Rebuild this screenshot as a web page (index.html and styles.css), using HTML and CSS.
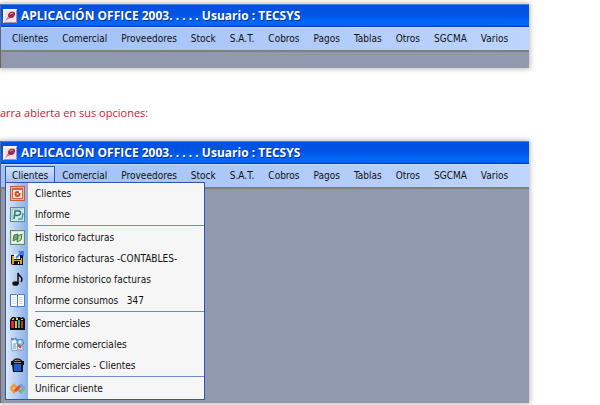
FILE: index.html
```html
<!DOCTYPE html>
<html lang="es">
<head>
    <meta charset="UTF-8">
    <meta name="viewport" content="width=device-width, initial-scale=1.0">
    <title>Aplicación Office 2003</title>
    <link rel="stylesheet" href="styles.css">
</head>
<body>

    <!-- Barra cerrada -->
    <section class="window">
        <header class="title-bar">
            <svg class="app-icon" viewBox="0 0 14 14">
                <rect width="14" height="14" fill="#f3e1e8"/>
                <path d="M1 13V1h12" fill="none" stroke="#fff"/>
                <path d="M1 13.500h12.500V1" fill="none" stroke="#b98ba0"/>
                <path d="M2 12l4-6 4 2-5 2z" fill="#c27a92"/>
                <path d="M5 7q0-4 4-4.500 3.500 0 3 3Q11 9 8 9 5.500 9 5 7z" fill="#a0274c"/>
                <path d="M7 5l3-1" stroke="#dfa3b6"/>
            </svg>
            <h1>APLICACIÓN OFFICE 2003. . . . . Usuario : TECSYS</h1>
        </header>
        <nav class="menu-bar">
            <button class="menu-btn">Clientes</button>
            <button class="menu-btn">Comercial</button>
            <button class="menu-btn">Proveedores</button>
            <button class="menu-btn">Stock</button>
            <button class="menu-btn">S.A.T.</button>
            <button class="menu-btn">Cobros</button>
            <button class="menu-btn">Pagos</button>
            <button class="menu-btn">Tablas</button>
            <button class="menu-btn">Otros</button>
            <button class="menu-btn">SGCMA</button>
            <button class="menu-btn">Varios</button>
        </nav>
        <div class="workspace workspace-short"></div>
    </section>

    <p class="caption">arra abierta en sus opciones:</p>

    <!-- Barra abierta -->
    <section class="window">
        <header class="title-bar">
            <svg class="app-icon" viewBox="0 0 14 14">
                <rect width="14" height="14" fill="#f3e1e8"/>
                <path d="M1 13V1h12" fill="none" stroke="#fff"/>
                <path d="M1 13.500h12.500V1" fill="none" stroke="#b98ba0"/>
                <path d="M2 12l4-6 4 2-5 2z" fill="#c27a92"/>
                <path d="M5 7q0-4 4-4.500 3.500 0 3 3Q11 9 8 9 5.500 9 5 7z" fill="#a0274c"/>
                <path d="M7 5l3-1" stroke="#dfa3b6"/>
            </svg>
            <h1>APLICACIÓN OFFICE 2003. . . . . Usuario : TECSYS</h1>
        </header>
        <nav class="menu-bar">
            <div class="menu">
                <button class="menu-btn open" aria-expanded="true">Clientes</button>
                <div class="dropdown">
                    <button class="item">
                        <svg class="icon" viewBox="0 0 15 15">
                            <rect x=".5" y=".5" width="14" height="14" fill="#f0b49a" stroke="#c8593a"/>
                            <rect x="2" y="2" width="11" height="11" fill="#d9613c"/>
                            <rect x="3" y="4" width="9" height="8" fill="#fbe9df"/>
                            <circle cx="7.500" cy="8" r="3" fill="#d04a22"/>
                            <circle cx="7.500" cy="8" r="1" fill="#fbe9df"/>
                            <path d="M9 5h2v2H9z" fill="#fff"/>
                        </svg>
                        Clientes
                    </button>
                    <button class="item">
                        <svg class="icon" viewBox="0 0 15 15">
                            <rect x=".5" y=".5" width="14" height="14" fill="#d5e9ea" stroke="#4f9096"/>
                            <path d="M2 13V2h11" fill="none" stroke="#8cbcc0"/>
                            <path d="M4 12l1-8h3.500q2.500 0 2 2.300Q10 8.500 7 8.500H5" fill="none" stroke="#27757d" stroke-width="1.500"/>
                            <path d="M8 12h4l1-6" fill="none" stroke="#4a979d" stroke-width="1.500"/>
                        </svg>
                        Informe
                    </button>
                    <hr>
                    <button class="item">
                        <svg class="icon" viewBox="0 0 15 15">
                            <rect x=".5" y=".5" width="14" height="14" fill="#d6e7d4" stroke="#5b8f62"/>
                            <rect x="2" y="2" width="11" height="11" fill="#f0f6ee"/>
                            <path d="M4 5l4-1-1 5-4 2z" fill="#79a879" stroke="#3d7a48"/>
                            <path d="M8 6l4-2-1 6-4 2z" fill="#b9d5b6" stroke="#3d7a48"/>
                        </svg>
                        Historico facturas
                    </button>
                    <button class="item">
                        <svg class="icon" viewBox="0 0 15 15">
                            <path d="M1 4h12v10H3l-2-1z" fill="#111"/>
                            <path d="M2 5h2v4h7V7h1v6H2z" fill="#e6a51c"/>
                            <rect x="4" y="3" width="6" height="5" fill="#f2f2f2"/>
                            <rect x="4" y="10" width="6" height="4" fill="#111"/>
                            <rect x="8" y="11" width="1" height="2" fill="#fff"/>
                            <path d="M6 7l5-5" stroke="#3a7be8" stroke-width="2"/>
                            <path d="M8 0h6v6l-2-2-2-2z" fill="#3a7be8"/>
                        </svg>
                        Historico facturas -CONTABLES-
                    </button>
                    <button class="item">
                        <svg class="icon" viewBox="0 0 15 15">
                            <ellipse cx="5.500" cy="11.500" rx="3.200" ry="2.300" fill="#111"/>
                            <path d="M8 12V1q.5 2.500 2.500 3.500Q13 6.500 11 10" fill="none" stroke="#111" stroke-width="1.500"/>
                        </svg>
                        Informe historico facturas
                    </button>
                    <button class="item">
                        <svg class="icon" viewBox="0 0 15 15">
                            <path d="M.5 1.500h6l1 1 1-1h6v12h-6l-1 1-1-1h-6z" fill="#fff" stroke="#3f7fd6"/>
                            <path d="M7.500 2v12" stroke="#3f7fd6"/>
                            <path d="M2 4.500h4M2 6.500h4M2 8.500h4M2 10.500h4M9 4.500h4M9 6.500h4M9 8.500h4M9 10.500h4" stroke="#d4d8dc"/>
                        </svg>
                        <span class="label">Informe consumos   347</span>
                    </button>
                    <hr>
                    <button class="item">
                        <svg class="icon" viewBox="0 0 15 15">
                            <path d="M0 4l2-3h3l1 1 2-1h2l1 1 2-1 2 2v11H0z" fill="#111"/>
                            <path d="M1 5h3v7H1z" fill="#d92b1f"/>
                            <path d="M2 3l2-1v2H2zM6 2h2v2H6z" fill="#f3d13a"/>
                            <path d="M5 5h2v7H5z" fill="#f2b51d"/>
                            <path d="M8 4h2v8H8z" fill="#24b5b5"/>
                            <path d="M11 5h2v7h-2z" fill="#d92b1f"/>
                            <path d="M11 3h2v1h-2z" fill="#f3d13a"/>
                        </svg>
                        Comerciales
                    </button>
                    <button class="item">
                        <svg class="icon" viewBox="0 0 15 15">
                            <path d="M1 4l4-2 3 2v9l-6 1z" fill="#edf4fb" stroke="#7fa3c4"/>
                            <path d="M3 7h3M3 9h3M3 11h3" stroke="#6c93b8"/>
                            <path d="M1 2h3M5 1l2 2" stroke="#5c8fbd" stroke-width="2"/>
                            <path d="M7 3l5-1 2 4-3 3-4-2z" fill="#7dbbe0" stroke="#4a86b4"/>
                            <circle cx="10" cy="5" r="1.500" fill="#dff2fb"/>
                            <path d="M7 9h6v4H8z" fill="#f8f8fb" stroke="#7793bd"/>
                            <path d="M8 8l3 3" stroke="#d8483b" stroke-width="2"/>
                        </svg>
                        Informe comerciales
                    </button>
                    <button class="item">
                        <svg class="icon" viewBox="0 0 15 15">
                            <path d="M3 3q4-4 9 0" fill="none" stroke="#222" stroke-width="1.500"/>
                            <path d="M1 3h13v4H1z" fill="#111"/>
                            <path d="M2 6h11v8H3z" fill="#111"/>
                            <path d="M4 6h7v7H4z" fill="#1f5bd0"/>
                            <path d="M4 4h7v1H4z" fill="#8296ae"/>
                            <path d="M6 2h3v1H6z" fill="#d9603b"/>
                        </svg>
                        Comerciales - Clientes
                    </button>
                    <hr>
                    <button class="item">
                        <svg class="icon" viewBox="0 0 15 15">
                            <path d="M7 7L4 4 1 7l3 4 3-3" fill="none" stroke="#ef9a2d" stroke-width="2.500"/>
                            <path d="M8 7l3-3 3 3-3 4-3-3" fill="none" stroke="#6fa6dc" stroke-width="2.500"/>
                            <path d="M5 10l5-5" stroke="#e2502f" stroke-width="3"/>
                            <path d="M9 9l2 2 3-4" fill="none" stroke="#7dbb4c" stroke-width="2"/>
                        </svg>
                        Unificar cliente
                    </button>
                </div>
            </div>
            <button class="menu-btn">Comercial</button>
            <button class="menu-btn">Proveedores</button>
            <button class="menu-btn">Stock</button>
            <button class="menu-btn">S.A.T.</button>
            <button class="menu-btn">Cobros</button>
            <button class="menu-btn">Pagos</button>
            <button class="menu-btn">Tablas</button>
            <button class="menu-btn">Otros</button>
            <button class="menu-btn">SGCMA</button>
            <button class="menu-btn">Varios</button>
        </nav>
        <div class="workspace"></div>
    </section>

</body>
</html>
```
FILE: styles.css
```css
* {
    box-sizing: border-box;
}

body {
    font-family: "DejaVu Sans Condensed", Tahoma, sans-serif;
    font-size: 10px;
    margin: 0;
    padding: 4px 71px 2px 0;
    background-color: #fff;
    color: #111;
}

.window {
    border-left: 1px solid #5d6785;
    box-shadow: 0 0 5px 1px rgba(0, 0, 0, 0.28);
}

.title-bar {
    display: flex;
    align-items: center;
    gap: 4px;
    height: 23px;
    padding-left: 2px;
    border-top: 1px solid #3f83dc;
    border-bottom: 1px solid #0038c0;
    background: linear-gradient(#0050e0, #0054e3 45%, #0068fc 80%, #0060f4);
}

.title-bar h1 {
    margin: 0;
    color: #fff;
    font-family: "Open Sans", "Trebuchet MS", sans-serif;
    font-size: 12px;
    font-weight: bold;
    white-space: nowrap;
    text-shadow: 1px 1px 0 #0a2f8f;
}

.app-icon {
    width: 14px;
    height: 14px;
}

.menu-bar {
    display: flex;
    height: 23px;
    padding: 1px 4px 0;
    border-top: 1px solid #c9dcfb;
    background: linear-gradient(90deg, #a0c0f6, #bdd4fb);
}

.menu-btn {
    height: 18px;
    padding: 0 6px;
    border: 1px solid transparent;
    background: none;
    color: inherit;
    font: inherit;
    white-space: nowrap;
}

.menu-btn.open {
    border-color: #2c55b0;
    background: linear-gradient(#d3e1fa, #a3bfee);
}

.workspace {
    height: 216px;
    border-top: 2px solid #827f78;
    border-left: 2px solid #9a958c;
    background-color: #9199ae;
}

.workspace-short {
    height: 18px;
}

.caption {
    margin: 36px 0 19px;
    color: #d0202c;
    font-family: "Open Sans", "Trebuchet MS", sans-serif;
    font-size: 11px;
    line-height: 18px;
}

.menu {
    position: relative;
}

/* Menú desplegable */
.dropdown {
    position: absolute;
    top: 16px;
    left: 0;
    width: 200px;
    border: 1px solid #2c55b0;
    background: linear-gradient(90deg, #dbe8fc, #88aee8 22px, #f6f6f6 22px);
}

.item {
    display: flex;
    align-items: center;
    gap: 10px;
    width: 100%;
    height: 21px;
    padding: 0 4px;
    border: none;
    background: none;
    color: inherit;
    font: inherit;
    white-space: nowrap;
}

.label {
    white-space: pre;
}

.icon {
    width: 15px;
    height: 15px;
}

.dropdown hr {
    height: 1px;
    margin: 0 0 1px 29px;
    border: none;
    background-color: #6a8ccb;
}
```
